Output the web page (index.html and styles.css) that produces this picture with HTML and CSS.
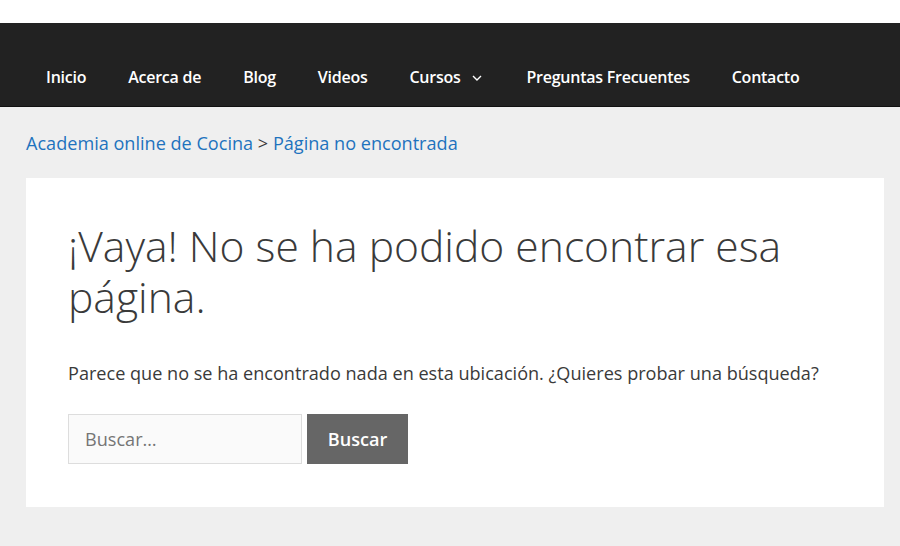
FILE: index.html
```html
<!DOCTYPE html>
<html lang="es">
<head>
<meta charset="utf-8">
<title>Página no encontrada</title>
<link rel="stylesheet" href="styles.css">
</head>
<body>
<div class="topbar"></div>
<nav class="nav">
  <ul class="menu">
    <li><a href="#">Inicio</a></li>
    <li><a href="#">Acerca de</a></li>
    <li><a href="#">Blog</a></li>
    <li><a href="#">Videos</a></li>
    <li><a href="#" class="has-sub">Cursos <svg class="chev" width="10" height="6" viewBox="0 0 10 6"><path d="M1 1 L5 5 L9 1" fill="none" stroke="#fff" stroke-width="1.4"/></svg></a></li>
    <li><a href="#">Preguntas Frecuentes</a></li>
    <li><a href="#">Contacto</a></li>
  </ul>
</nav>
<main class="site">
  <div class="crumbs"><a href="#">Academia online de Cocina</a> &gt; <a href="#">Página no encontrada</a></div>
  <article class="card">
    <h1 class="title">¡Vaya! No se ha podido encontrar esa página.</h1>
    <p class="lead">Parece que no se ha encontrado nada en esta ubicación. ¿Quieres probar una búsqueda?</p>
    <form class="search">
      <input class="field" type="search" placeholder="Buscar…">
      <button class="btn" type="button">Buscar</button>
    </form>
  </article>
</main>
</body>
</html>
```
FILE: styles.css
```css
* { box-sizing: border-box; }
html, body { margin: 0; padding: 0; }
body {
  background: #efefef;
  font-family: "Open Sans", "Liberation Sans", sans-serif;
  color: #3a3a3a;
  height: 546px;
  overflow: hidden;
}
.topbar { height: 23px; background: #fff; }
.nav {
  background: #222222;
  height: 84px;
  border-bottom: 1px solid #111;
  display: flex;
  align-items: flex-end;
  padding-left: 25px;
}
.menu {
  list-style: none;
  margin: 0;
  padding: 0;
  display: flex;
  align-items: center;
}
.menu a {
  display: flex;
  align-items: center;
  padding: 0 21px;
  color: #fff;
  text-decoration: none;
  font-size: 16px;
  font-weight: 600;
  line-height: 58px;
  letter-spacing: -0.25px;
}
.menu a.has-sub { padding-right: 24px; }
.chev { margin-left: 11px; margin-top: 2px; }
.site { padding: 0 16px 0 26px; }
.crumbs {
  font-size: 18.1px;
  color: #3a3a3a;
  padding-top: 22px;
  height: 71px;
  line-height: 28px;
}
.crumbs a { color: #1e73be; text-decoration: none; }
.card {
  background: #fff;
  width: 858px;
  padding: 42px;
  height: 329px;
}
.title {
  margin: 0 0 37px;
  font-size: 42.6px;
  font-weight: 300;
  line-height: 1.2;
  color: #3a3a3a;
}
.lead {
  margin: 0 0 26px;
  font-size: 18.1px;
  line-height: 1.6;
}
.search { display: flex; gap: 5px; }
.field {
  width: 234px;
  height: 50px;
  border: 1px solid #ddd;
  background: #fafafa;
  padding: 0 16px;
  font-family: inherit;
  font-size: 18.1px;
  color: #666;
}
.field::placeholder { color: #757575; }
.btn {
  width: 101px;
  height: 50px;
  border: 0;
  background: #666666;
  color: #fff;
  font-family: inherit;
  font-size: 18.1px;
  font-weight: 600;
}
```
